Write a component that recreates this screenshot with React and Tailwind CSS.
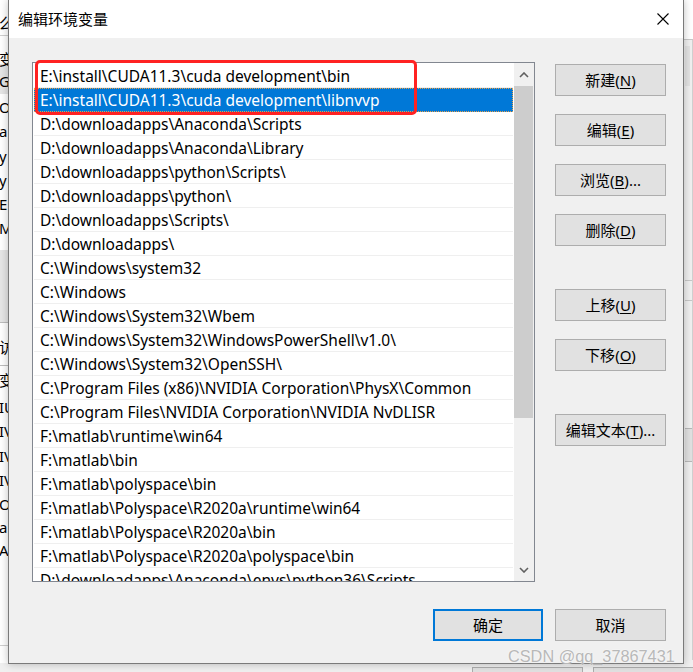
import React from "react";

const FONT = { fontFamily: '"Noto Sans", "Noto Sans CJK SC", sans-serif' };

const paths = [
  "E:\\install\\CUDA11.3\\cuda development\\bin",
  "E:\\install\\CUDA11.3\\cuda development\\libnvvp",
  "D:\\downloadapps\\Anaconda\\Scripts",
  "D:\\downloadapps\\Anaconda\\Library",
  "D:\\downloadapps\\python\\Scripts\\",
  "D:\\downloadapps\\python\\",
  "D:\\downloadapps\\Scripts\\",
  "D:\\downloadapps\\",
  "C:\\Windows\\system32",
  "C:\\Windows",
  "C:\\Windows\\System32\\Wbem",
  "C:\\Windows\\System32\\WindowsPowerShell\\v1.0\\",
  "C:\\Windows\\System32\\OpenSSH\\",
  "C:\\Program Files (x86)\\NVIDIA Corporation\\PhysX\\Common",
  "C:\\Program Files\\NVIDIA Corporation\\NVIDIA NvDLISR",
  "F:\\matlab\\runtime\\win64",
  "F:\\matlab\\bin",
  "F:\\matlab\\polyspace\\bin",
  "F:\\matlab\\Polyspace\\R2020a\\runtime\\win64",
  "F:\\matlab\\Polyspace\\R2020a\\bin",
  "F:\\matlab\\Polyspace\\R2020a\\polyspace\\bin",
  "D:\\downloadapps\\Anaconda\\envs\\python36\\Scripts",
];

// bits of the window sitting behind the dialog
const leftBits = [
  { top: 12, text: "么" },
  { top: 48, text: "变" },
  { top: 70, text: "G" },
  { top: 96, text: "Or" },
  { top: 120, text: "a" },
  { top: 145, text: "y" },
  { top: 169, text: "y" },
  { top: 193, text: "E" },
  { top: 217, text: "M" },
  { top: 336, text: "访" },
  { top: 369, text: "变" },
  { top: 396, text: "IU" },
  { top: 420, text: "IV" },
  { top: 445, text: "IV" },
  { top: 469, text: "IV" },
  { top: 493, text: "OS" },
  { top: 516, text: "a" },
  { top: 539, text: "A" },
];

function Btn({ label, hot, tail = "" }) {
  return (
    <button className="flex items-center justify-center h-[32px] w-[111px] text-[15px] text-black border border-[#adadad] bg-[#e1e1e1]">
      {label}
      {hot && (
        <>
          (<span className="underline underline-offset-2">{hot}</span>)
        </>
      )}
      {tail}
    </button>
  );
}

function Chevron({ down = false }) {
  return (
    <svg width="10" height="6" viewBox="0 0 10 6">
      <path
        d={down ? "M1 1 L5 5 L9 1" : "M1 5 L5 1 L9 5"}
        fill="none"
        stroke="#606060"
        strokeWidth="1.6"
      />
    </svg>
  );
}

export default function App() {
  return (
    <div className="relative w-[693px] h-[672px] overflow-hidden bg-[#f0f0f0]" style={FONT}>
      {/* window behind, left edge */}
      <div className="absolute left-0 top-0 w-[8px] h-[663px] bg-white overflow-hidden">
        <div className="absolute left-0 top-[35px] w-full h-px bg-[#cfcfcf]" />
        <div className="absolute left-0 top-[64px] w-full h-[30px] bg-[#e5e5e5]" />
        <div className="absolute left-0 top-[250px] w-full h-[72px] bg-[#e6e6e6]" />
        <div className="absolute left-0 top-[322px] w-full h-px bg-[#bdbdbd]" />
        <div className="absolute left-0 top-[365px] w-full h-px bg-[#bdbdbd]" />
        <div className="absolute left-0 top-[645px] w-full h-px bg-[#cfcfcf]" />
        {leftBits.map((b, i) => (
          <div
            key={i}
            className="absolute left-[-1px] text-[15px] leading-[22px] text-black whitespace-nowrap"
            style={{ top: b.top }}
          >
            {b.text}
          </div>
        ))}
      </div>

      {/* window behind, right edge */}
      <div className="absolute left-[684px] top-0 w-[9px] h-[663px] bg-[#f0f0f0]">
        <div className="h-[40px] bg-white border-b border-[#c8c8c8]" />
        <div className="absolute left-[1px] top-[46px] w-[5px] h-[40px] bg-[#e4e4e4]" />
        <div className="absolute left-[1px] top-[280px] w-full h-px bg-[#c8c8c8]" />
        <div className="absolute left-[1px] top-[300px] w-full h-px bg-[#c8c8c8]" />
        <div className="absolute left-[1px] top-[428px] w-full h-[34px] bg-[#e1e1e1] border-y border-[#b8b8b8]" />
        <div className="absolute right-0 top-[40px] w-px h-[620px] bg-[#d0d0d0]" />
      </div>

      {/* window behind, bottom edge */}
      <div className="absolute left-0 top-[664px] w-[693px] h-[8px] bg-[#f0f0f0]">
        <div className="absolute left-[472px] top-[3px] w-[111px] h-[10px] border border-[#adadad] bg-[#e1e1e1]" />
        <div className="absolute left-[593px] top-[3px] w-[111px] h-[10px] border border-[#adadad] bg-[#e1e1e1]" />
      </div>

      {/* dialog */}
      <div className="absolute left-[8px] top-0 w-[676px] h-[664px] flex flex-col border-x border-b border-[#7a7a7a] shadow-[0_0_8px_rgba(0,0,0,0.25)]">
        <div className="h-[38px] flex items-center justify-between bg-white pl-[9px]">
          <span className="text-[15px] text-black">编辑环境变量</span>
          <div className="w-[40px] h-full flex items-center justify-center">
            <svg width="12" height="12" viewBox="0 0 12 12">
              <path d="M0.5 0.5 L11.5 11.5 M11.5 0.5 L0.5 11.5" stroke="#000" strokeWidth="1.1" />
            </svg>
          </div>
        </div>

        <div className="flex-1 flex flex-col bg-[#f0f0f0] pl-[23px] pr-[17px] pt-[24px]">
          <div className="flex">
            {/* list */}
            <div className="w-[503px] h-[520px] flex border border-[#828790] bg-white">
              <div className="w-[481px] h-full overflow-hidden pt-[1px] pl-[1px]">
                {paths.map((p, i) => {
                  const sel = i === 1;
                  return (
                    <div
                      key={i}
                      className={`h-[24px] w-[479px] flex items-center pl-[6px] pt-[2px] text-[15.5px] whitespace-nowrap ${
                        sel
                          ? "bg-[#0078d7] text-white outline outline-1 outline-dotted outline-offset-[-1px] outline-[#e8a048]"
                          : "text-black border-b border-[#efefef]"
                      }`}
                    >
                      {p}
                    </div>
                  );
                })}
              </div>
              <div className="w-[20px] h-full flex flex-col bg-[#f0f0f0]">
                <div className="h-[23px] flex items-center justify-center">
                  <Chevron />
                </div>
                <div className="w-[19px] h-[332px] bg-[#cdcdcd]" />
                <div className="flex-1" />
                <div className="h-[23px] flex items-center justify-center">
                  <Chevron down />
                </div>
              </div>
            </div>

            {/* side buttons */}
            <div className="ml-[20px] pt-[2px] flex flex-col">
              <Btn label="新建" hot="N" />
              <div className="mt-[18px]"><Btn label="编辑" hot="E" /></div>
              <div className="mt-[18px]"><Btn label="浏览" hot="B" tail="..." /></div>
              <div className="mt-[18px]"><Btn label="删除" hot="D" /></div>
              <div className="mt-[43px]"><Btn label="上移" hot="U" /></div>
              <div className="mt-[18px]"><Btn label="下移" hot="O" /></div>
              <div className="mt-[43px]"><Btn label="编辑文本" hot="T" tail="..." /></div>
            </div>
          </div>

          <div className="mt-[27px] flex justify-end gap-[12px]">
            <button className="flex items-center justify-center h-[32px] w-[110px] text-[15px] text-black border-2 border-[#0078d7] bg-[#e1e1e1]">
              确定
            </button>
            <Btn label="取消" />
          </div>
        </div>
      </div>

      {/* red highlight drawn on the screenshot */}
      <div className="absolute left-[35px] top-[60px] w-[382px] h-[55px] border-[3px] border-[#ff2222] rounded-[5px]" />

      {/* watermark */}
      <div
        className="absolute left-[508px] top-[644px] text-[16.3px] text-[#b8b8b8] whitespace-nowrap [text-shadow:0_0_2px_#fff]"
        style={{ fontFamily: '"Liberation Sans", Arial, sans-serif' }}
      >
        CSDN @qq_37867431
      </div>
    </div>
  );
}
